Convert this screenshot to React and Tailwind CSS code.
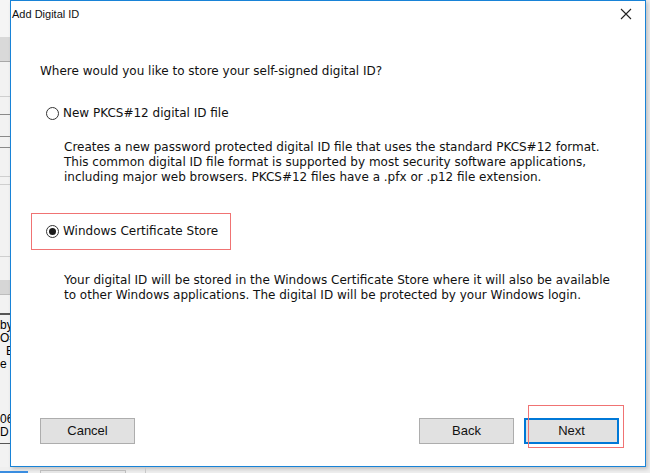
import React from 'react';

const BODY = { fontFamily: '"DejaVu Sans", Verdana, sans-serif' };
const UI = { fontFamily: '"Liberation Sans", Arial, sans-serif' };

function Radio({ checked }) {
  return (
    <span className="w-[13px] h-[13px] rounded-full border border-[#333] bg-white flex items-center justify-center shrink-0">
      {checked && <span className="w-[7px] h-[7px] rounded-full bg-[#1a1a1a]" />}
    </span>
  );
}

function Button({ children, primary }) {
  return (
    <button
      className={
        'w-[95px] h-[26px] bg-[#e1e1e1] text-[13px] text-[#111] flex items-center justify-center ' +
        (primary ? 'border-2 border-[#0078d7]' : 'border border-[#adadad]')
      }
      style={UI}
    >
      {children}
    </button>
  );
}

// slice of the app that sits behind the dialog
function LeftStrip() {
  return (
    <div className="w-[10px] h-[467px] bg-[#f2f2f2] flex flex-col overflow-hidden text-[12px] text-black leading-[13px]" style={UI}>
      <div className="h-[37px] bg-[#f5f5f5]" />
      <div className="h-[25px] bg-[#d9d9d9] border-b border-[#a8a8a8]" />
      <div className="h-[35px] border-b border-[#cfcfcf]" />
      <div className="h-[18px] border-b border-[#8a8a8a]" />
      <div className="h-[22px] border-b border-[#8a8a8a]" />
      <div className="h-[11px] border-b border-[#8a8a8a]" />
      <div className="h-[29px] border-b border-[#cfcfcf]" />
      <div className="h-[8px] border-b border-[#cfcfcf]" />
      <div className="h-[72px] border-b border-[#cfcfcf]" />
      <div className="h-[23px]" />
      <div className="h-[15px] bg-[#d6d6d6] border-b border-[#bdbdbd]" />
      <div className="h-[20px] border-b-2 border-[#555]" />
      <div className="pt-[4px] flex flex-col whitespace-nowrap">
        <span className="h-[13px]">by</span>
        <span className="h-[13px]">O=</span>
        <span className="h-[13px] pl-[6px]">E</span>
        <span className="h-[13px]">e</span>
        <span className="h-[42px]" />
        <span className="h-[13px]">06</span>
        <span className="h-[13px]">D</span>
      </div>
      <div className="mt-[4px] border-b border-[#555]" />
    </div>
  );
}

export default function App() {
  return (
    <div className="w-[650px] h-[473px] overflow-hidden bg-[#efefef] flex flex-col">
      <div className="flex">
        <LeftStrip />
        <div className="relative w-[636px] h-[467px] border border-[#1883d7] bg-white flex flex-col shadow-[2px_2px_4px_rgba(0,0,0,0.2)]">
          {/* title bar */}
          <div className="h-[29px] flex items-center justify-between pl-[1px] pr-[13px] text-[#111]" style={UI}>
            <span className="text-[11px] leading-[14px] mt-[-3px]">Add Digital ID</span>
            <svg width="12" height="12" viewBox="0 0 12 12" className="mt-[-3px]">
              <path d="M1 1L11 11M11 1L1 11" stroke="#222" strokeWidth="1.1" />
            </svg>
          </div>

          <div className="flex flex-col text-[12px] leading-[15px] text-[#111] pl-[29px]" style={BODY}>
            <p className="mt-[34px]">Where would you like to store your self-signed digital ID?</p>

            <label className="mt-[27px] ml-[6px] flex items-center gap-[4px] h-[15px]">
              <Radio />
              <span>New PKCS#12 digital ID file</span>
            </label>

            <p className="mt-[19px] ml-[24px] whitespace-nowrap">
              Creates a new password protected digital ID file that uses the standard PKCS#12 format.
              <br />
              This common digital ID file format is supported by most security software applications,
              <br />
              including major web browsers. PKCS#12 files have a .pfx or .p12 file extension.
            </p>

            <label className="mt-[28px] ml-[-9px] w-[200px] h-[37px] border-[1.5px] border-[#f07373] flex items-center gap-[4px] pl-[14px]">
              <Radio checked />
              <span>Windows Certificate Store</span>
            </label>

            <p className="mt-[23px] ml-[24px] whitespace-nowrap">
              Your digital ID will be stored in the Windows Certificate Store where it will also be available
              <br />
              to other Windows applications. The digital ID will be protected by your Windows login.
            </p>
          </div>

          <div className="mt-auto mb-[22px] flex items-center pl-[29px] pr-[26px]">
            <Button>Cancel</Button>
            <div className="flex-1" />
            <Button>Back</Button>
            <div className="w-[10px]" />
            <Button primary>Next</Button>
          </div>

          {/* annotation box drawn over the Next button */}
          <div className="absolute left-[517px] top-[404px] w-[96px] h-[43px] border-[1.5px] border-[#f07373] pointer-events-none" />
        </div>
        <div className="flex-1" />
      </div>

      {/* slice of the app below the dialog */}
      <div className="flex-1 relative">
        <div className="absolute left-0 bottom-0 w-[28px] h-[2px] bg-[#3a8de0]" />
        <div className="absolute left-[40px] top-[3px] w-[86px] h-[10px] border border-[#bdbdbd] bg-[#e6e6e6]" />
        <div className="absolute left-[145px] top-[0px] w-[1px] h-[10px] bg-[#c8c8c8]" />
      </div>
    </div>
  );
}
